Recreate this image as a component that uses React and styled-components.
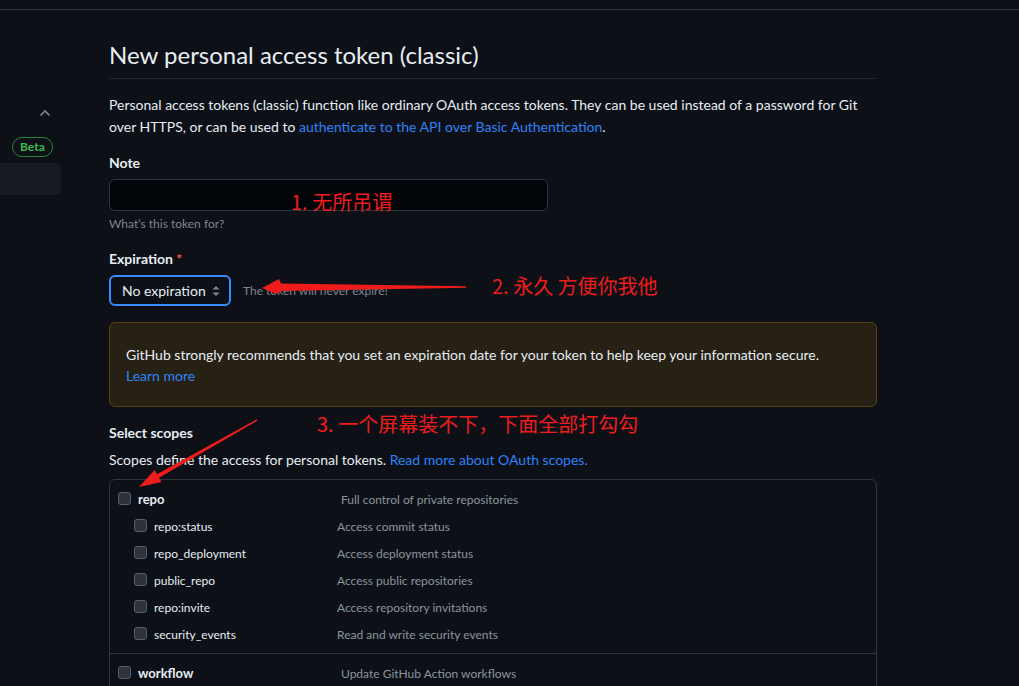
import React from "react";
import styled, { createGlobalStyle } from "styled-components";

const scopes = [
  { name: "repo", desc: "Full control of private repositories", top: true },
  { name: "repo:status", desc: "Access commit status" },
  { name: "repo_deployment", desc: "Access deployment status" },
  { name: "public_repo", desc: "Access public repositories" },
  { name: "repo:invite", desc: "Access repository invitations" },
  { name: "security_events", desc: "Read and write security events" },
];

const App = () => {
  return (
    <Page>
      <GlobalStyle />
      <TopRule />
      <Layout>
        <Sidebar>
          <CollapseRow>
            <svg width="12" height="8" viewBox="0 0 12 8">
              <path d="M1.5 6.5 L6 2 L10.5 6.5" fill="none" stroke="#7d8590" strokeWidth="1.6" />
            </svg>
          </CollapseRow>
          <BadgeRow>
            <Badge>Beta</Badge>
          </BadgeRow>
          <NavItem />
        </Sidebar>

        <Main>
          <Subhead>
            <Title>New personal access token (classic)</Title>
          </Subhead>
          <Lead>
            Personal access tokens (classic) function like ordinary OAuth access tokens. They can be used instead of a
            password for Git over HTTPS, or can be used to{" "}
            <Link>authenticate to the API over Basic Authentication</Link>.
          </Lead>

          <Label $mt={14}>Note</Label>
          <TextInput />
          <Hint>What’s this token for?</Hint>

          <Label $mt={15}>
            Expiration <Required>*</Required>
          </Label>
          <ExpireRow>
            <Select>
              No expiration
              <svg width="8" height="12" viewBox="0 0 8 12">
                <path d="M4 1 L7.5 4.6 H0.5 Z M4 11 L7.5 7.4 H0.5 Z" fill="#7d8590" />
              </svg>
            </Select>
            <Hint $inline>The token will never expire!</Hint>
          </ExpireRow>

          <Flash>
            GitHub strongly recommends that you set an expiration date for your token to help keep your information
            secure.
            <br />
            <Link>Learn more</Link>
          </Flash>

          <Label $mt={15}>Select scopes</Label>
          <ScopesNote>
            Scopes define the access for personal tokens. <Link>Read more about OAuth scopes.</Link>
          </ScopesNote>

          <ScopeTable>
            <ScopeGroup>
              {scopes.map((s) => (
                <ScopeRow key={s.name} $top={s.top}>
                  <Check />
                  <ScopeName $top={s.top}>{s.name}</ScopeName>
                  <ScopeDesc>{s.desc}</ScopeDesc>
                </ScopeRow>
              ))}
            </ScopeGroup>
            <ScopeGroup>
              <ScopeRow $top>
                <Check />
                <ScopeName $top>workflow</ScopeName>
                <ScopeDesc>Update GitHub Action workflows</ScopeDesc>
              </ScopeRow>
            </ScopeGroup>
          </ScopeTable>
        </Main>
      </Layout>

      {/* red annotations drawn over the screenshot */}
      <Note $x={291} $y={188}>1. 无所吊谓</Note>
      <Note $x={492} $y={272}>2. 永久 方便你我他</Note>
      <Note $x={317} $y={410}>3. 一个屏幕装不下，下面全部打勾勾</Note>
      <Arrows width="1019" height="686" viewBox="0 0 1019 686">
        <polygon points="262,288 279,279 281,283.5 466,286.2 466,287.8 281,291 276,294" fill="#f01c1c" />
        <polygon
          points="139,487 154.6,469.9 157,474.3 256.6,419.3 257.4,420.7 159,477.7 161.5,482"
          fill="#f01c1c"
        />
      </Arrows>
    </Page>
  );
};

export default App;

const GlobalStyle = createGlobalStyle`
  html, body {
    margin: 0;
    background: #0d1117;
  }
  body {
    font-family: Lato, "Noto Sans CJK SC", sans-serif;
    color: #e6edf3;
    font-size: 14px;
    line-height: 1.5;
  }
`;

const Page = styled.div`
  position: relative;
  height: 686px;
  overflow: hidden;
  background: #0d1117;
`;

const TopRule = styled.div`
  height: 9px;
  border-bottom: 1px solid #30363d;
`;

const Layout = styled.div`
  display: flex;
`;

const Sidebar = styled.div`
  width: 61px;
  flex-shrink: 0;
  display: flex;
  flex-direction: column;
`;

const CollapseRow = styled.div`
  margin-top: 95px;
  height: 16px;
  display: flex;
  align-items: center;
  justify-content: flex-end;
  padding-right: 10px;
`;

const BadgeRow = styled.div`
  margin-top: 14px;
  padding-left: 12px;
`;

const Badge = styled.span`
  display: inline-flex;
  align-items: center;
  height: 20px;
  box-sizing: border-box;
  padding: 0 7px;
  border: 1px solid #238636;
  border-radius: 10px;
  color: #3fb950;
  font-size: 12px;
  font-weight: 700;
`;

const NavItem = styled.div`
  margin-top: 6px;
  height: 32px;
  background: #161b22;
  border-radius: 0 6px 6px 0;
`;

const Main = styled.div`
  margin-left: 48px;
  width: 768px;
  padding-top: 27px;
`;

const Subhead = styled.div`
  padding-bottom: 5px;
  border-bottom: 1px solid #21262d;
`;

const Title = styled.h1`
  margin: 0;
  font-size: 24px;
  font-weight: 400;
  line-height: 36px;
`;

const Lead = styled.p`
  margin: 15px 0 0;
  line-height: 22px;
`;

const Link = styled.a`
  color: #2f81f7;
  text-decoration: none;
`;

const Label = styled.div`
  margin-top: ${(p) => p.$mt}px;
  font-weight: 700;
  line-height: 21px;
`;

const Required = styled.span`
  color: #f85149;
`;

const TextInput = styled.div`
  margin-top: 6px;
  width: 439px;
  height: 32px;
  box-sizing: border-box;
  background: #010409;
  border: 1px solid #30363d;
  border-radius: 6px;
`;

const Hint = styled.div`
  margin-top: ${(p) => (p.$inline ? 0 : 4)}px;
  font-size: 12px;
  line-height: 18px;
  color: #7d8590;
  white-space: nowrap;
`;

const ExpireRow = styled.div`
  margin-top: 6px;
  display: flex;
  align-items: center;
  gap: 12px;
`;

const Select = styled.div`
  width: 122px;
  height: 31px;
  box-sizing: border-box;
  display: flex;
  align-items: center;
  justify-content: space-between;
  padding: 0 9px 0 11px;
  border: 2px solid #388bfd;
  border-radius: 6px;
  background: #0d1117;
  white-space: nowrap;
`;

const Flash = styled.div`
  margin-top: 16px;
  padding: 21px 16px 20px;
  background: #272115;
  border: 1px solid #574011;
  border-radius: 6px;
  line-height: 21px;
`;

const ScopesNote = styled.div`
  margin-top: 6px;
  line-height: 21px;
`;

const ScopeTable = styled.div`
  margin-top: 9px;
  border: 1px solid #30363d;
  border-radius: 6px;
`;

const ScopeGroup = styled.div`
  padding: 11px 0 9px;
  display: flex;
  flex-direction: column;
  gap: 9px;
  & + & {
    border-top: 1px solid #30363d;
  }
`;

const ScopeRow = styled.div`
  display: flex;
  align-items: center;
  height: 18px;
  padding-left: ${(p) => (p.$top ? 8 : 24)}px;
`;

const Check = styled.span`
  width: 13px;
  height: 13px;
  box-sizing: border-box;
  flex-shrink: 0;
  margin-top: -3px;
  background: #2d333b;
  border: 1px solid #545d68;
  border-radius: 3px;
`;

const ScopeName = styled.span`
  margin-left: 7px;
  width: ${(p) => (p.$top ? 203 : 183)}px;
  font-size: ${(p) => (p.$top ? 13 : 12)}px;
  font-weight: ${(p) => (p.$top ? 700 : 400)};
`;

const ScopeDesc = styled.span`
  font-size: 12px;
  color: #8b949e;
`;

const Note = styled.div`
  position: absolute;
  left: ${(p) => p.$x}px;
  top: ${(p) => p.$y}px;
  font-family: "Noto Sans CJK SC", sans-serif;
  font-size: 20px;
  line-height: 28px;
  color: #f01c1c;
  white-space: nowrap;
`;

const Arrows = styled.svg`
  position: absolute;
  left: 0;
  top: 0;
  pointer-events: none;
`;
